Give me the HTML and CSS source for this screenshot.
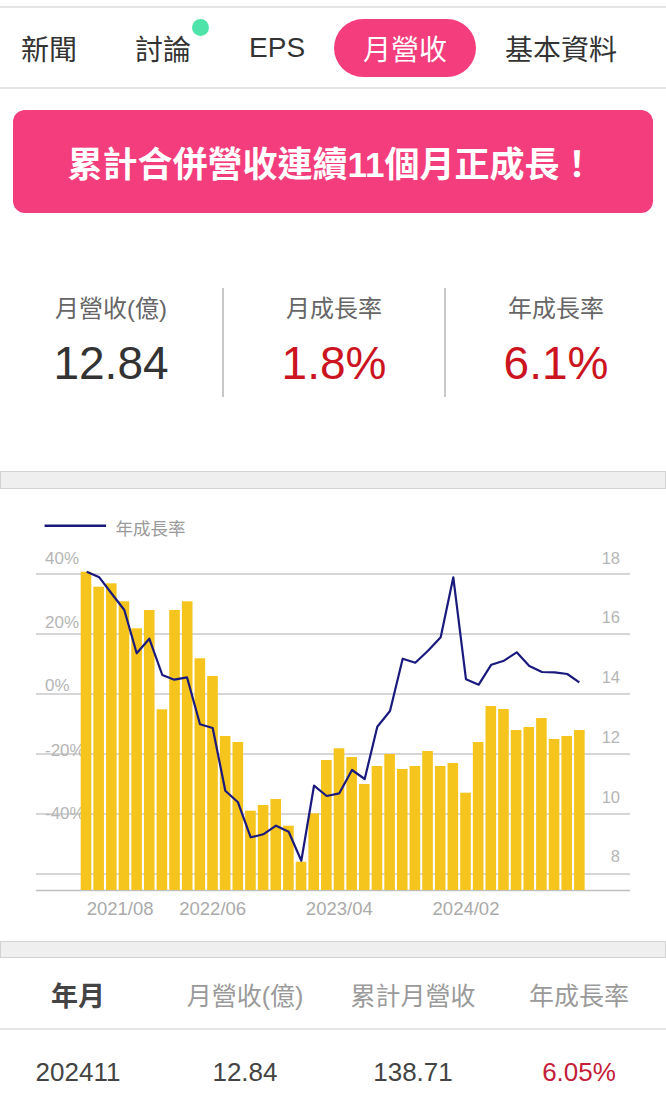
FILE: index.html
```html
<!DOCTYPE html>
<html lang="zh-Hant">
<head>
<meta charset="utf-8">
<title>月營收</title>
<link rel="stylesheet" href="styles.css">
</head>
<body>
<nav class="tabs">
  <div class="tab">新聞</div>
  <div class="tab">討論<span class="dot"></span></div>
  <div class="tab">EPS</div>
  <div class="tab active">月營收</div>
  <div class="tab">基本資料</div>
</nav>

<div class="banner">累計合併營收連續11個月正成長！</div>

<section class="stats">
  <div class="stat">
    <div class="stat-label">月營收(億)</div>
    <div class="stat-value">12.84</div>
  </div>
  <div class="stat">
    <div class="stat-label">月成長率</div>
    <div class="stat-value red">1.8%</div>
  </div>
  <div class="stat">
    <div class="stat-label">年成長率</div>
    <div class="stat-value red">6.1%</div>
  </div>
</section>

<div class="band"></div>

<svg class="chart" viewBox="0 489 666 452" width="666" height="452" xmlns="http://www.w3.org/2000/svg">
  <line class="legend-line" x1="44.6" y1="525.7" x2="106" y2="525.7"/>
  <text class="legend-text" x="115.5" y="535">年成長率</text>

  <g class="grid">
    <line x1="36" y1="574" x2="630" y2="574"/>
    <line x1="36" y1="634" x2="630" y2="634"/>
    <line x1="36" y1="694" x2="630" y2="694"/>
    <line x1="36" y1="754" x2="630" y2="754"/>
    <line x1="36" y1="814" x2="630" y2="814"/>
    <line x1="36" y1="874" x2="630" y2="874"/>
  </g>
  <line class="axis" x1="36" y1="890.5" x2="630" y2="890.5"/>

  <g class="ax-left">
    <text x="45" y="563.8">40%</text>
    <text x="45" y="627.8">20%</text>
    <text x="45" y="691.1">0%</text>
    <text x="45" y="756.1">-20%</text>
    <text x="45" y="819.1">-40%</text>
  </g>
  <g class="ax-right">
    <text x="620" y="563.6">18</text>
    <text x="620" y="623.2">16</text>
    <text x="620" y="682.6">14</text>
    <text x="620" y="742.6">12</text>
    <text x="620" y="802.6">10</text>
    <text x="620" y="861.9">8</text>
  </g>

  <g class="bars">
    <rect x="80.7" y="571.7" width="10.6" height="318.3"/>
    <rect x="93.35" y="586.7" width="10.6" height="303.3"/>
    <rect x="106" y="583.3" width="10.6" height="306.7"/>
    <rect x="118.65" y="601.3" width="10.6" height="288.7"/>
    <rect x="131.3" y="628.3" width="10.6" height="261.7"/>
    <rect x="143.95" y="610" width="10.6" height="280"/>
    <rect x="156.6" y="709.3" width="10.6" height="180.7"/>
    <rect x="169.25" y="610" width="10.6" height="280"/>
    <rect x="181.9" y="601.3" width="10.6" height="288.7"/>
    <rect x="194.55" y="658.3" width="10.6" height="231.7"/>
    <rect x="207.2" y="676" width="10.6" height="214"/>
    <rect x="219.85" y="736" width="10.6" height="154"/>
    <rect x="232.5" y="742" width="10.6" height="148"/>
    <rect x="245.15" y="810.7" width="10.6" height="79.3"/>
    <rect x="257.8" y="805" width="10.6" height="85"/>
    <rect x="270.45" y="799" width="10.6" height="91"/>
    <rect x="283.1" y="825.7" width="10.6" height="64.3"/>
    <rect x="295.75" y="861.7" width="10.6" height="28.3"/>
    <rect x="308.4" y="813.3" width="10.6" height="76.7"/>
    <rect x="321.05" y="760" width="10.6" height="130"/>
    <rect x="333.7" y="748.3" width="10.6" height="141.7"/>
    <rect x="346.35" y="757" width="10.6" height="133"/>
    <rect x="359" y="784" width="10.6" height="106"/>
    <rect x="371.65" y="766" width="10.6" height="124"/>
    <rect x="384.3" y="754" width="10.6" height="136"/>
    <rect x="396.95" y="769" width="10.6" height="121"/>
    <rect x="409.6" y="766" width="10.6" height="124"/>
    <rect x="422.25" y="751" width="10.6" height="139"/>
    <rect x="434.9" y="766" width="10.6" height="124"/>
    <rect x="447.55" y="763" width="10.6" height="127"/>
    <rect x="460.2" y="792.7" width="10.6" height="97.3"/>
    <rect x="472.85" y="742" width="10.6" height="148"/>
    <rect x="485.5" y="706" width="10.6" height="184"/>
    <rect x="498.15" y="709" width="10.6" height="181"/>
    <rect x="510.8" y="730" width="10.6" height="160"/>
    <rect x="523.45" y="727" width="10.6" height="163"/>
    <rect x="536.1" y="718" width="10.6" height="172"/>
    <rect x="548.75" y="739" width="10.6" height="151"/>
    <rect x="561.4" y="736" width="10.6" height="154"/>
    <rect x="574.05" y="730" width="10.6" height="160"/>
  </g>

  <polyline class="yoy" points="86.7,571.7 99.3,577.3 112,594 124.3,610 136.7,653.3 149.3,638.7 162.3,675 174.3,679.7 187,677.3 200,724.3 212.7,728 225.3,790.7 238,802.3 250.7,837.3 263.3,834.3 276,825.7 288.7,831.7 301.3,860.7 314,785.7 326.7,796 339.3,793.3 352,770 364.7,779 377.3,726.7 390,711 402.7,658.7 415.3,662.7 428,650.7 440.7,637.3 453.3,577.3 466,679.3 478.7,684.7 491.3,664.7 504,660.7 516.7,652.3 529.3,666 542,672 554.7,672.3 567.3,674 579.3,682.3"/>

  <g class="ax-bottom">
    <text x="86.7" y="915">2021/08</text>
    <text class="mid" x="212.7" y="915">2022/06</text>
    <text class="mid" x="339.3" y="915">2023/04</text>
    <text class="mid" x="466" y="915">2024/02</text>
  </g>
</svg>

<div class="band band-2"></div>

<div class="thead">
  <div class="th-first">年月</div>
  <div>月營收(億)</div>
  <div>累計月營收</div>
  <div>年成長率</div>
</div>
<div class="trow">
  <div>202411</div>
  <div>12.84</div>
  <div>138.71</div>
  <div class="red-soft">6.05%</div>
</div>
</body>
</html>
```

FILE: styles.css
```css
* { box-sizing: border-box; }

body {
  margin: 0;
  background: #ffffff;
  font-family: "Liberation Sans", "Noto Sans CJK TC", sans-serif;
  color: #333333;
}

.tabs {
  display: flex;
  align-items: center;
  height: 83px;
  margin-top: 6px;
  padding-left: 21px;
  border-top: 2px solid #e4e4e4;
  border-bottom: 2px solid #e4e4e4;
}

.tab {
  position: relative;
  display: flex;
  align-items: center;
  height: 58px;
  padding: 0 29px;
  border-radius: 29px;
  font-size: 28px;
  color: #333333;
}

.tab:first-child { padding-left: 0; }

.tab.active {
  background: #f33d7c;
  color: #ffffff;
}

.dot {
  position: absolute;
  top: 0;
  right: 11px;
  width: 17px;
  height: 17px;
  border-radius: 50%;
  background: #4fe3a9;
}

.banner {
  display: flex;
  align-items: center;
  justify-content: center;
  height: 103px;
  margin: 21px 13px 0;
  padding-right: 4px;
  border-radius: 12px;
  background: #f33d7c;
  color: #ffffff;
  font-size: 35px;
  font-weight: 700;
}

.stats {
  display: grid;
  grid-template-columns: repeat(3, 1fr);
  height: 109px;
  margin-top: 75px;
}

.stat {
  display: flex;
  flex-direction: column;
  align-items: center;
  padding-top: 5px;
}

.stat + .stat { border-left: 2px solid #c8c8c8; }

.stat-label {
  font-size: 24px;
  line-height: 32px;
  color: #666666;
}

.stat-value {
  margin-top: 10px;
  font-size: 46px;
  line-height: 56px;
  color: #333333;
}

.red { color: #cc1320; }
.red-soft { color: #c4203a; }

.band {
  height: 18px;
  margin-top: 74px;
  background: #efefef;
  border: 1px solid #d2d2d2;
}

.band-2 {
  height: 17px;
  margin-top: 0;
}

.chart { display: block; }

.legend-line { stroke: #1a1a7e; stroke-width: 2.5; }
.legend-text {
  font-family: "Noto Sans CJK TC", sans-serif;
  font-size: 17.5px;
  fill: #9a9a9a;
}

.grid line { stroke: #c9c9c9; stroke-width: 1.5; }
.axis { stroke: #bfbfbf; stroke-width: 1.5; }

.ax-left text {
  font-size: 17px;
  fill: #b5b5b5;
}

.ax-right text {
  font-size: 16.5px;
  fill: #b5b5b5;
  text-anchor: end;
}

.ax-bottom text {
  font-size: 18.5px;
  fill: #aaaaaa;
}

.ax-bottom .mid { text-anchor: middle; }

.bars rect { fill: #f5c51d; }

.yoy {
  fill: none;
  stroke: #1a1a7e;
  stroke-width: 2.2;
  stroke-linejoin: round;
}

.thead,
.trow {
  display: grid;
  grid-template-columns: 156px 178px 158px 1fr;
  align-items: center;
  text-align: center;
}

.thead {
  height: 72px;
  padding-top: 2px;
  border-bottom: 2px solid #e6e6e6;
  font-size: 25px;
  color: #9a9a9a;
}

.th-first {
  font-size: 27px;
  font-weight: 700;
  color: #444444;
}

.trow {
  height: 84px;
  font-size: 26px;
  color: #444444;
}
```
